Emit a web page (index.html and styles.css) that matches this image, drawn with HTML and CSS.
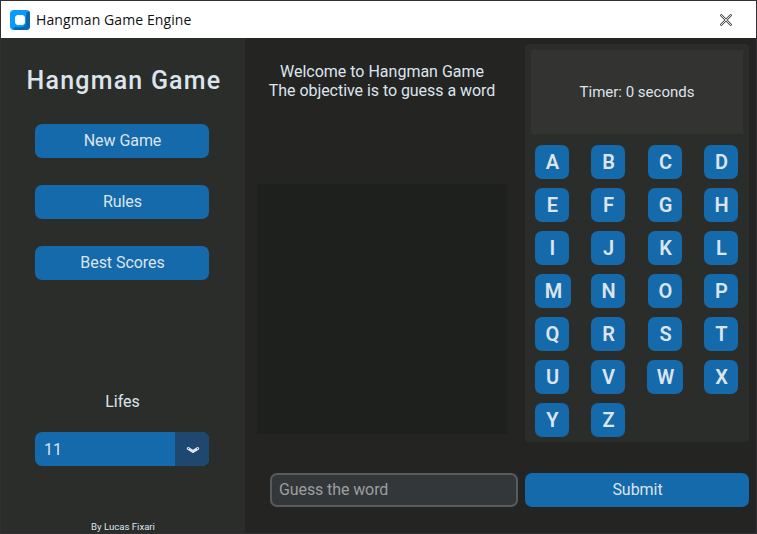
FILE: index.html
```html
<!DOCTYPE html>
<html lang="en">
<head>
<meta charset="utf-8">
<title>Hangman Game Engine</title>
<link rel="stylesheet" href="styles.css">
</head>
<body>
<div class="window">
  <header class="titlebar">
    <svg class="logo" width="20" height="20" viewBox="0 0 20 20">
      <rect width="20" height="20" rx="4" fill="#0a9bfd"/>
      <path d="M16 3l3-2q1 1 1 3v12q0 4-4 4H5l-2-1 2-2h8l3-3z" fill="#0868b8"/>
      <path d="M7 5h6l2 2v6l-2 2H7l-2-2V7z" fill="#fff"/>
    </svg>
    <span class="app-name">Hangman Game Engine</span>
    <svg class="close" width="12" height="12" viewBox="0 0 12 12" fill="none">
      <path d="M.5.5l11 11M11.500.5l-11 11" stroke="#555" stroke-width="2.400"/>
      <path d="M1 1l10 10M11 1L1 11" stroke="#fff" stroke-width=".8"/>
    </svg>
  </header>
  <div class="content">
    <aside class="sidebar">
      <h1 class="heading">Hangman Game</h1>
      <nav class="menu">
        <button class="btn">New Game</button>
        <button class="btn">Rules</button>
        <button class="btn">Best Scores</button>
      </nav>
      <div class="lifes-label">Lifes</div>
      <div class="select">
        <span class="select-value">11</span>
        <span class="select-arrow">
          <svg width="14" height="8" viewBox="0 0 14 8" fill="none" stroke="#dce4ee" stroke-linecap="round" stroke-linejoin="round">
            <path d="M2.300 2.600L7 5.600l4.700-3" stroke-width="3"/>
            <path d="M2.500 2.500h.1M11.400 2.500h.1" stroke="#1f4870" stroke-width="1"/>
          </svg>
        </span>
      </div>
      <div class="author">By Lucas Fixari</div>
    </aside>
    <main class="game">
      <p class="welcome">Welcome to Hangman Game<br><span class="objective">The objective is to guess a word</span></p>
      <div class="canvas"></div>
      <input class="guess" type="text" placeholder="Guess the word">
    </main>
    <section class="controls">
      <div class="panel">
        <div class="timer">Timer: 0 seconds</div>
        <div class="letters">
          <button class="key">A</button><button class="key">B</button><button class="key">C</button><button class="key">D</button>
          <button class="key">E</button><button class="key">F</button><button class="key">G</button><button class="key">H</button>
          <button class="key">I</button><button class="key">J</button><button class="key">K</button><button class="key">L</button>
          <button class="key wide">M</button><button class="key">N</button><button class="key">O</button><button class="key">P</button>
          <button class="key">Q</button><button class="key">R</button><button class="key">S</button><button class="key">T</button>
          <button class="key">U</button><button class="key">V</button><button class="key wide">W</button><button class="key">X</button>
          <button class="key">Y</button><button class="key">Z</button>
        </div>
      </div>
      <button class="btn submit">Submit</button>
    </section>
  </div>
</div>
</body>
</html>
```
FILE: styles.css
```css
* { box-sizing: border-box; }
body {
  margin: 0;
  font-family: Roboto, "Liberation Sans", sans-serif;
  font-size: 16px;
  color: #dce4ee;
}
button { border: 0; padding: 0; font: inherit; color: inherit; }
.window {
  width: 757px;
  height: 534px;
  border: 1px solid #323032;
  background: #242422;
  display: flex;
  flex-direction: column;
}
.titlebar {
  height: 37px;
  flex: none;
  background: #fff;
  display: flex;
  align-items: center;
  padding: 0 24px 0 9px;
}
.app-name {
  margin-left: 6px;
  flex: 1;
  font-family: "Open Sans", sans-serif;
  font-size: 14px;
  letter-spacing: 0.1px;
  color: #111;
}
.content { flex: 1; display: flex; min-height: 0; }
.sidebar {
  width: 244px;
  background: #2b2d2a;
  display: flex;
  flex-direction: column;
  padding: 0 36px 0 34px;
}
.heading {
  margin: 28px -22px 0 -18px;
  font-size: 25px;
  line-height: 30px;
  font-weight: 500;
  letter-spacing: 1.2px;
  text-align: center;
  white-space: nowrap;
}
.menu { margin-top: 28px; display: flex; flex-direction: column; gap: 27px; }
.btn {
  height: 34px;
  border-radius: 7px;
  background: #146aaa;
  line-height: 34px;
}
.menu .btn, .submit { padding-left: 1px; letter-spacing: -0.05px; }
.lifes-label { margin-top: 112px; padding-left: 1px; line-height: 20px; text-align: center; }
.select {
  margin-top: 20px;
  flex: none;
  height: 34px;
  display: flex;
  border-radius: 7px;
  overflow: hidden;
  background: #146aaa;
}
.select-value { flex: 1; padding-left: 9px; line-height: 35px; }
.select-arrow {
  width: 34px;
  padding: 2px 0 0 2px;
  background: #1f4870;
  display: flex;
  align-items: center;
  justify-content: center;
}
.author {
  margin-top: 54px;
  padding-left: 2px;
  font-size: 9.600px;
  line-height: 14px;
  text-align: center;
}
.game { width: 280px; padding: 24px 7px 0 12px; }
.welcome { margin: 0; width: 250px; line-height: 19px; text-align: center; white-space: nowrap; }
.objective { letter-spacing: -0.05px; }
.canvas { margin-top: 84px; width: 250px; height: 250px; background: #1e201d; }
.guess {
  display: block;
  margin: 39px 0 0 13px;
  width: 248px;
  height: 34px;
  padding: 0 7px 2px;
  border: 2px solid #565b5e;
  border-radius: 7px;
  background: #33373a;
  font: inherit;
  letter-spacing: -0.1px;
  color: #dce4ee;
}
.guess::placeholder { color: #9e9e9e; opacity: 1; }
.controls { width: 224px; padding-top: 6px; }
.panel { height: 398px; padding: 6px; border-radius: 4px; background: #2b2d2a; }
.timer {
  height: 84px;
  background: #333331;
  font-size: 15px;
  line-height: 84px;
  text-align: center;
}
.letters {
  margin: 11px 0 0 4px;
  display: grid;
  grid-template-columns: 36px 36px 36px 35px;
  column-gap: 20px;
  row-gap: 9px;
}
.key {
  width: 34px;
  height: 34px;
  padding-left: 1px;
  border-radius: 7px;
  background: #146aaa;
  font-size: 20px;
  font-weight: 600;
  line-height: 33px;
}
.key:nth-child(4n+3) { justify-self: center; }
.key:nth-child(4n) { margin-left: 1px; }
.key.wide { width: 36px; }
.submit { display: block; width: 100%; margin-top: 31px; }
```
